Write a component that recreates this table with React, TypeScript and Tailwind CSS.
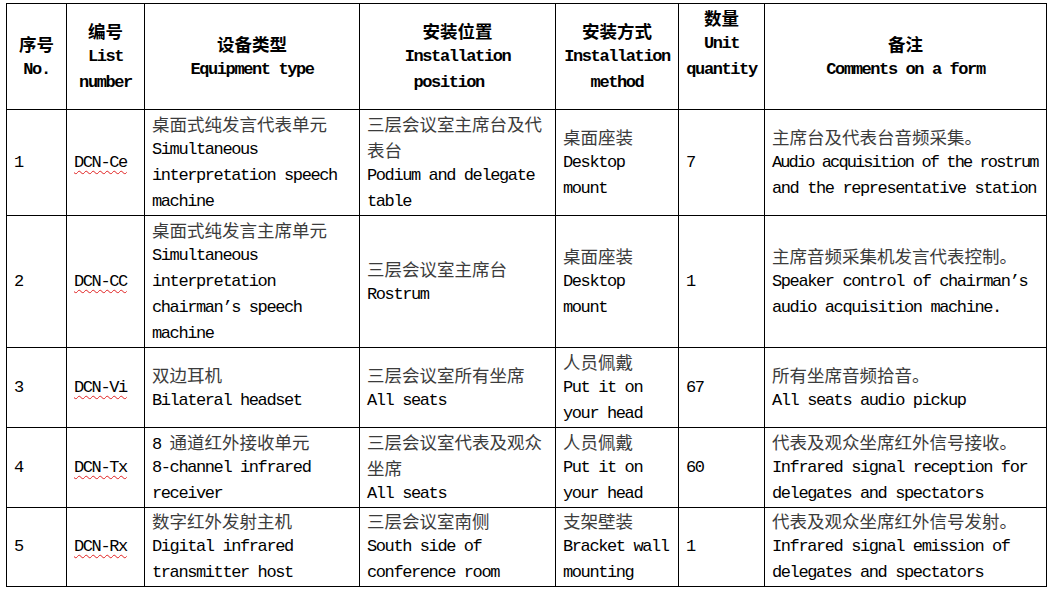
import React from "react";

const CJK = /([\u3000-\u303f\u4e00-\u9fff\uff00-\uffef]+)/;

type Row = {
  no: string;
  code: string;
  h: string;
  type: string[];
  position: string[];
  method: string[];
  qty: string;
  note: string[];
};

const header: string[][] = [
  ["序号", "No."],
  ["编号", "List", "number"],
  ["设备类型", "Equipment type"],
  ["安装位置", "Installation", "position\u00a0\u00a0"],
  ["安装方式", "Installation", "method"],
  ["数量", "Unit", "quantity", "\u00a0"],
  ["备注", "Comments on a form"],
];

const rows: Row[] = [
  {
    no: "1",
    code: "DCN-Ce",
    h: "h-[106px]",
    type: ["桌面式纯发言代表单元", "Simultaneous", "interpretation speech", "machine"],
    position: ["三层会议室主席台及代", "表台", "Podium and delegate", "table"],
    method: ["桌面座装", "Desktop", "mount"],
    qty: "7",
    note: ["主席台及代表台音频采集。", "Audio acquisition of the rostrum", "and the representative station"],
  },
  {
    no: "2",
    code: "DCN-CC",
    h: "h-[132px]",
    type: ["桌面式纯发言主席单元", "Simultaneous", "interpretation", "chairman’s speech", "machine"],
    position: ["三层会议室主席台", "Rostrum"],
    method: ["桌面座装", "Desktop", "mount"],
    qty: "1",
    note: ["主席音频采集机发言代表控制。", "Speaker control of chairman’s", "audio acquisition machine."],
  },
  {
    no: "3",
    code: "DCN-Vi",
    h: "h-[80px]",
    type: ["双边耳机", "Bilateral headset"],
    position: ["三层会议室所有坐席", "All seats"],
    method: ["人员佩戴", "Put it on", "your head"],
    qty: "67",
    note: ["所有坐席音频拾音。", "All seats audio pickup"],
  },
  {
    no: "4",
    code: "DCN-Tx",
    h: "h-[80px]",
    type: ["8 通道红外接收单元", "8-channel infrared", "receiver"],
    position: ["三层会议室代表及观众", "坐席", "All seats"],
    method: ["人员佩戴", "Put it on", "your head"],
    qty: "60",
    note: ["代表及观众坐席红外信号接收。", "Infrared signal reception for", "delegates and spectators"],
  },
  {
    no: "5",
    code: "DCN-Rx",
    h: "h-[79px]",
    type: ["数字红外发射主机", "Digital infrared", "transmitter host"],
    position: ["三层会议室南侧", "South side of", "conference room"],
    method: ["支架壁装", "Bracket wall", "mounting"],
    qty: "1",
    note: ["代表及观众坐席红外信号发射。", "Infrared signal emission of", "delegates and spectators"],
  },
];

function Mixed({ text, bold }: { text: string; bold?: boolean }) {
  const tight = text.length > 30;
  const parts = text.split(CJK).filter(Boolean);
  return (
    <>
      {parts.map((p, i) =>
        CJK.test(p) ? (
          <span
            key={i}
            className={
              "font-['Noto_Sans_CJK_SC',sans-serif] text-[17.5px] tracking-normal " +
              (bold ? "text-black" : "text-[#3c3c3c]")
            }
          >
            {p}
          </span>
        ) : (
          <span key={i} className={tight ? "tracking-[-1.9px]" : ""}>
            {p}
          </span>
        )
      )}
    </>
  );
}

function Lines({ lines, bold }: { lines: string[]; bold?: boolean }) {
  return (
    <>
      {lines.map((l, i) => (
        <div key={i} className="h-[26px] whitespace-pre">
          <Mixed text={l} bold={bold} />
        </div>
      ))}
    </>
  );
}

const cell = "border border-black px-[7px] py-0 align-middle";

export default function App() {
  return (
    <div className="w-[1048px] h-[590px] overflow-hidden bg-white pt-[3px] pl-[6px]">
      <table className="w-[1040px] table-fixed border-collapse font-['Liberation_Mono',monospace] text-[17px] leading-[26px] tracking-[-1.4px] text-black">
        <colgroup>
          <col className="w-[60px]" />
          <col className="w-[78px]" />
          <col className="w-[215px]" />
          <col className="w-[196px]" />
          <col className="w-[123px]" />
          <col className="w-[86px]" />
          <col className="w-[282px]" />
        </colgroup>
        <thead>
          <tr className="h-[106px]">
            {header.map((h, i) => (
              <th key={i} className={cell + " text-center font-bold"}>
                <Lines lines={h} bold />
              </th>
            ))}
          </tr>
        </thead>
        <tbody>
          {rows.map((r) => (
            <tr key={r.no} className={r.h}>
              <td className={cell}>
                <Lines lines={[r.no]} />
              </td>
              <td className={cell}>
                <div className="h-[26px]">
                  <span className="underline decoration-wavy decoration-[#e02020] decoration-1 underline-offset-[3px]">
                    {r.code}
                  </span>
                </div>
              </td>
              <td className={cell}>
                <Lines lines={r.type} />
              </td>
              <td className={cell}>
                <Lines lines={r.position} />
              </td>
              <td className={cell}>
                <Lines lines={r.method} />
              </td>
              <td className={cell}>
                <Lines lines={[r.qty]} />
              </td>
              <td className={cell}>
                <Lines lines={r.note} />
              </td>
            </tr>
          ))}
        </tbody>
      </table>
    </div>
  );
}
